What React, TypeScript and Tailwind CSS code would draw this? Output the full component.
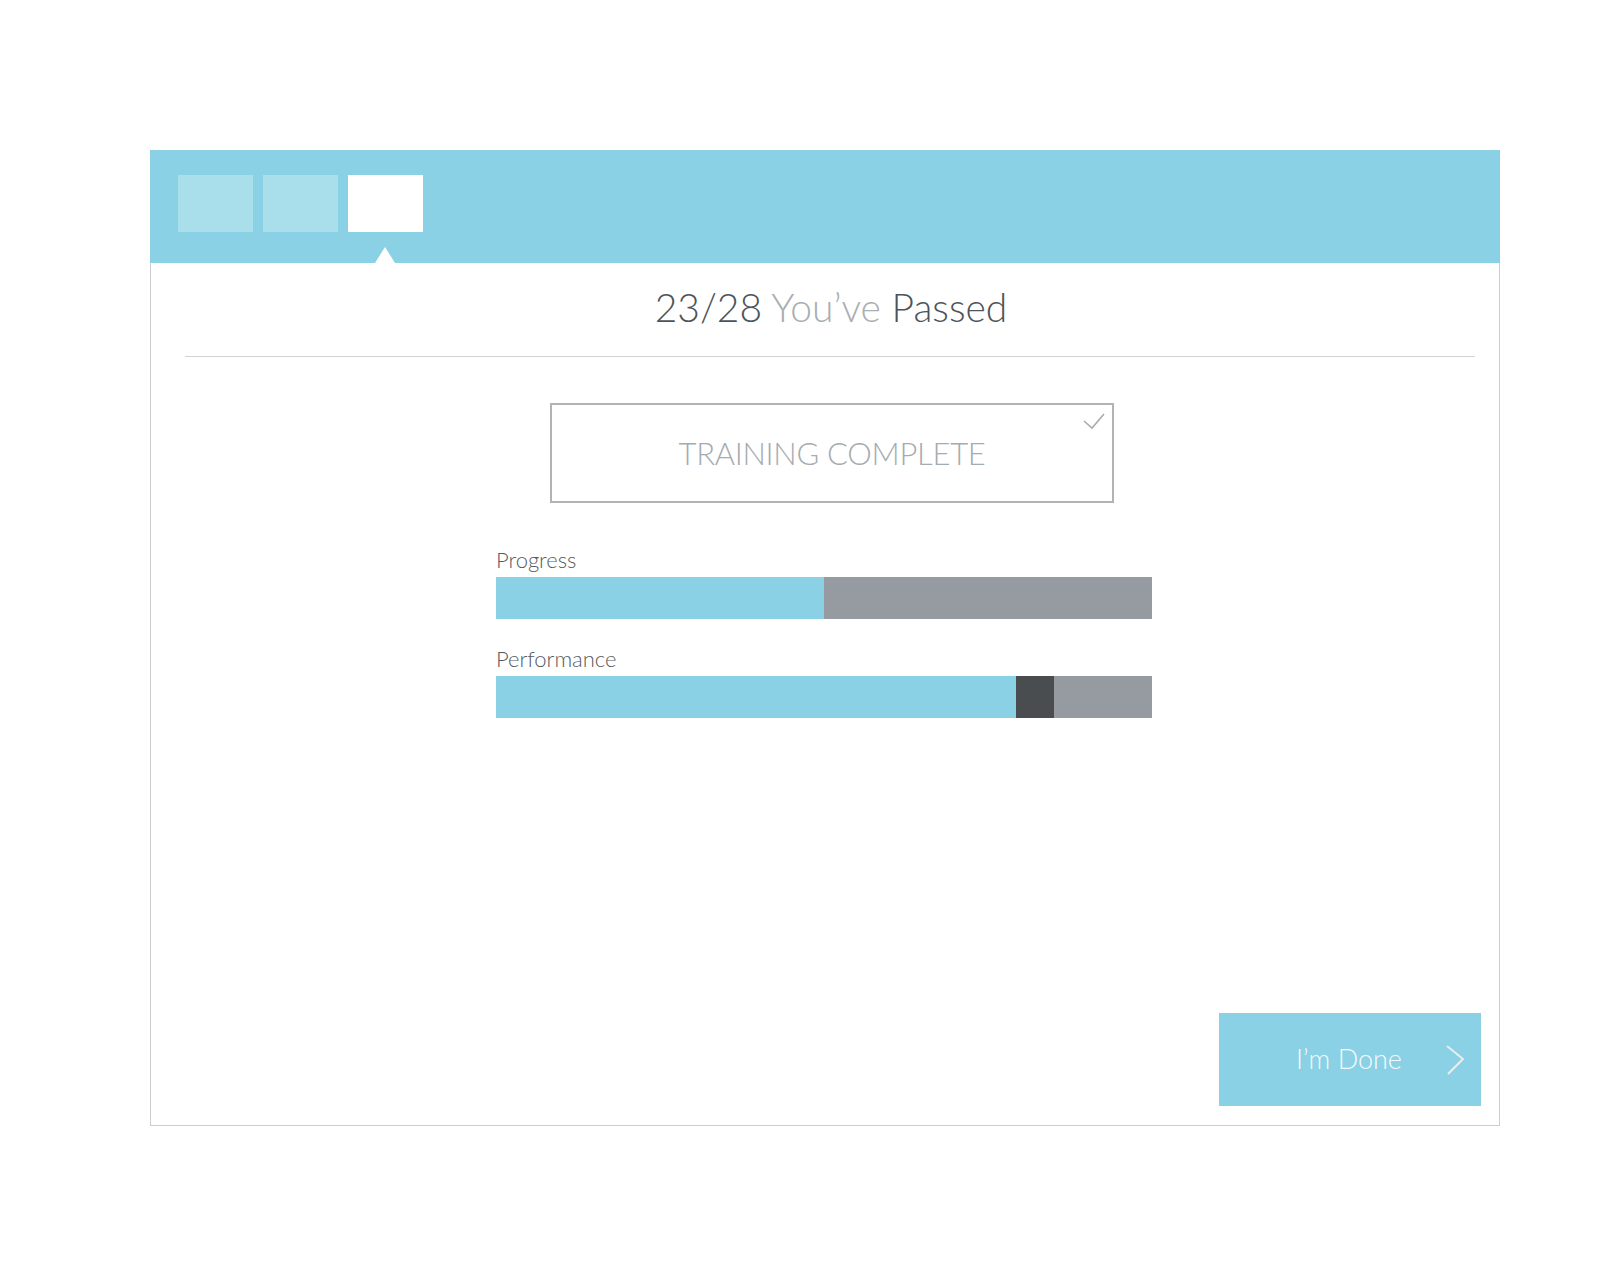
import { Fragment } from 'react';

const font = { fontFamily: 'Lato, "Open Sans", sans-serif' };

function Bar({ label, parts }: { label: string; parts: { w: number; color: string }[] }) {
  return (
    <div className="flex flex-col">
      <div className="text-[22px] leading-none font-light text-[#555b61] h-[22px]">{label}</div>
      <div className="flex mt-[6px] h-[42px] w-[656px]">
        {parts.map((p, i) => (
          <div key={i} className={p.color} style={{ width: p.w }} />
        ))}
      </div>
    </div>
  );
}

export default function App() {
  const tabs = ['bg-[#a9deeb]', 'bg-[#a9deeb]', 'bg-white'];

  return (
    <div className="min-h-[1267px] bg-white pt-[150px] pl-[150px]" style={font}>
      <div className="w-[1350px] h-[976px] border-x border-b border-[#cdcdcd] flex flex-col">
        {/* header with step tabs */}
        <div className="relative -mx-px h-[113px] bg-[#8bd1e5] flex gap-[10px] pl-[28px] pt-[25px]">
          {tabs.map((t, i) => (
            <div key={i} className={`${t} w-[75px] h-[57px]`} />
          ))}
          <div className="absolute bottom-0 left-[225px] w-0 h-0 border-l-[10px] border-r-[10px] border-b-[16px] border-l-transparent border-r-transparent border-b-white" />
        </div>

        <div className="pt-[25px] pl-[12px] text-center text-[39px] leading-none font-light text-[#4d545b]">
          <Fragment>
            23/28 <span className="text-[#a9aeb2]">You’ve</span> Passed
          </Fragment>
        </div>
        <div className="mt-[29px] ml-[34px] mr-[24px] h-px bg-[#d3d3d3]" />

        <div className="relative mt-[46px] ml-[399px] w-[564px] h-[100px] border-2 border-[#b1b3b5] flex items-center justify-center">
          <span className="text-[31px] leading-none font-light text-[#a6abaf] tracking-[-0.3px]">
            TRAINING COMPLETE
          </span>
          <svg className="absolute right-[6px] top-[7px]" width="24" height="20" viewBox="0 0 24 20" fill="none">
            <path d="M2 9 L10 16 L22 2" stroke="#a9acaf" strokeWidth="1.6" />
          </svg>
        </div>

        <div className="ml-[345px] mt-[46px] flex flex-col gap-[29px]">
          <Bar
            label="Progress"
            parts={[
              { w: 328, color: 'bg-[#8bd1e5]' },
              { w: 328, color: 'bg-[#959ba0]' },
            ]}
          />
          <Bar
            label="Performance"
            parts={[
              { w: 520, color: 'bg-[#8bd1e5]' },
              { w: 38, color: 'bg-[#4a4d50]' },
              { w: 98, color: 'bg-[#959ba0]' },
            ]}
          />
        </div>

        <div className="flex-1" />
        <div className="flex justify-end pr-[18px] pb-[19px]">
          <button className="w-[262px] h-[93px] bg-[#8bd1e5] flex items-center pl-[77px] pr-[16px]">
            <span className="text-[27px] leading-none font-light text-[#f3fafc] -mt-[3px]">I’m Done</span>
            <svg className="ml-auto" width="20" height="30" viewBox="0 0 20 30" fill="none">
              <path d="M2 1 L18 14 L3 29" stroke="#e6eef1" strokeWidth="2" />
            </svg>
          </button>
        </div>
      </div>
    </div>
  );
}
